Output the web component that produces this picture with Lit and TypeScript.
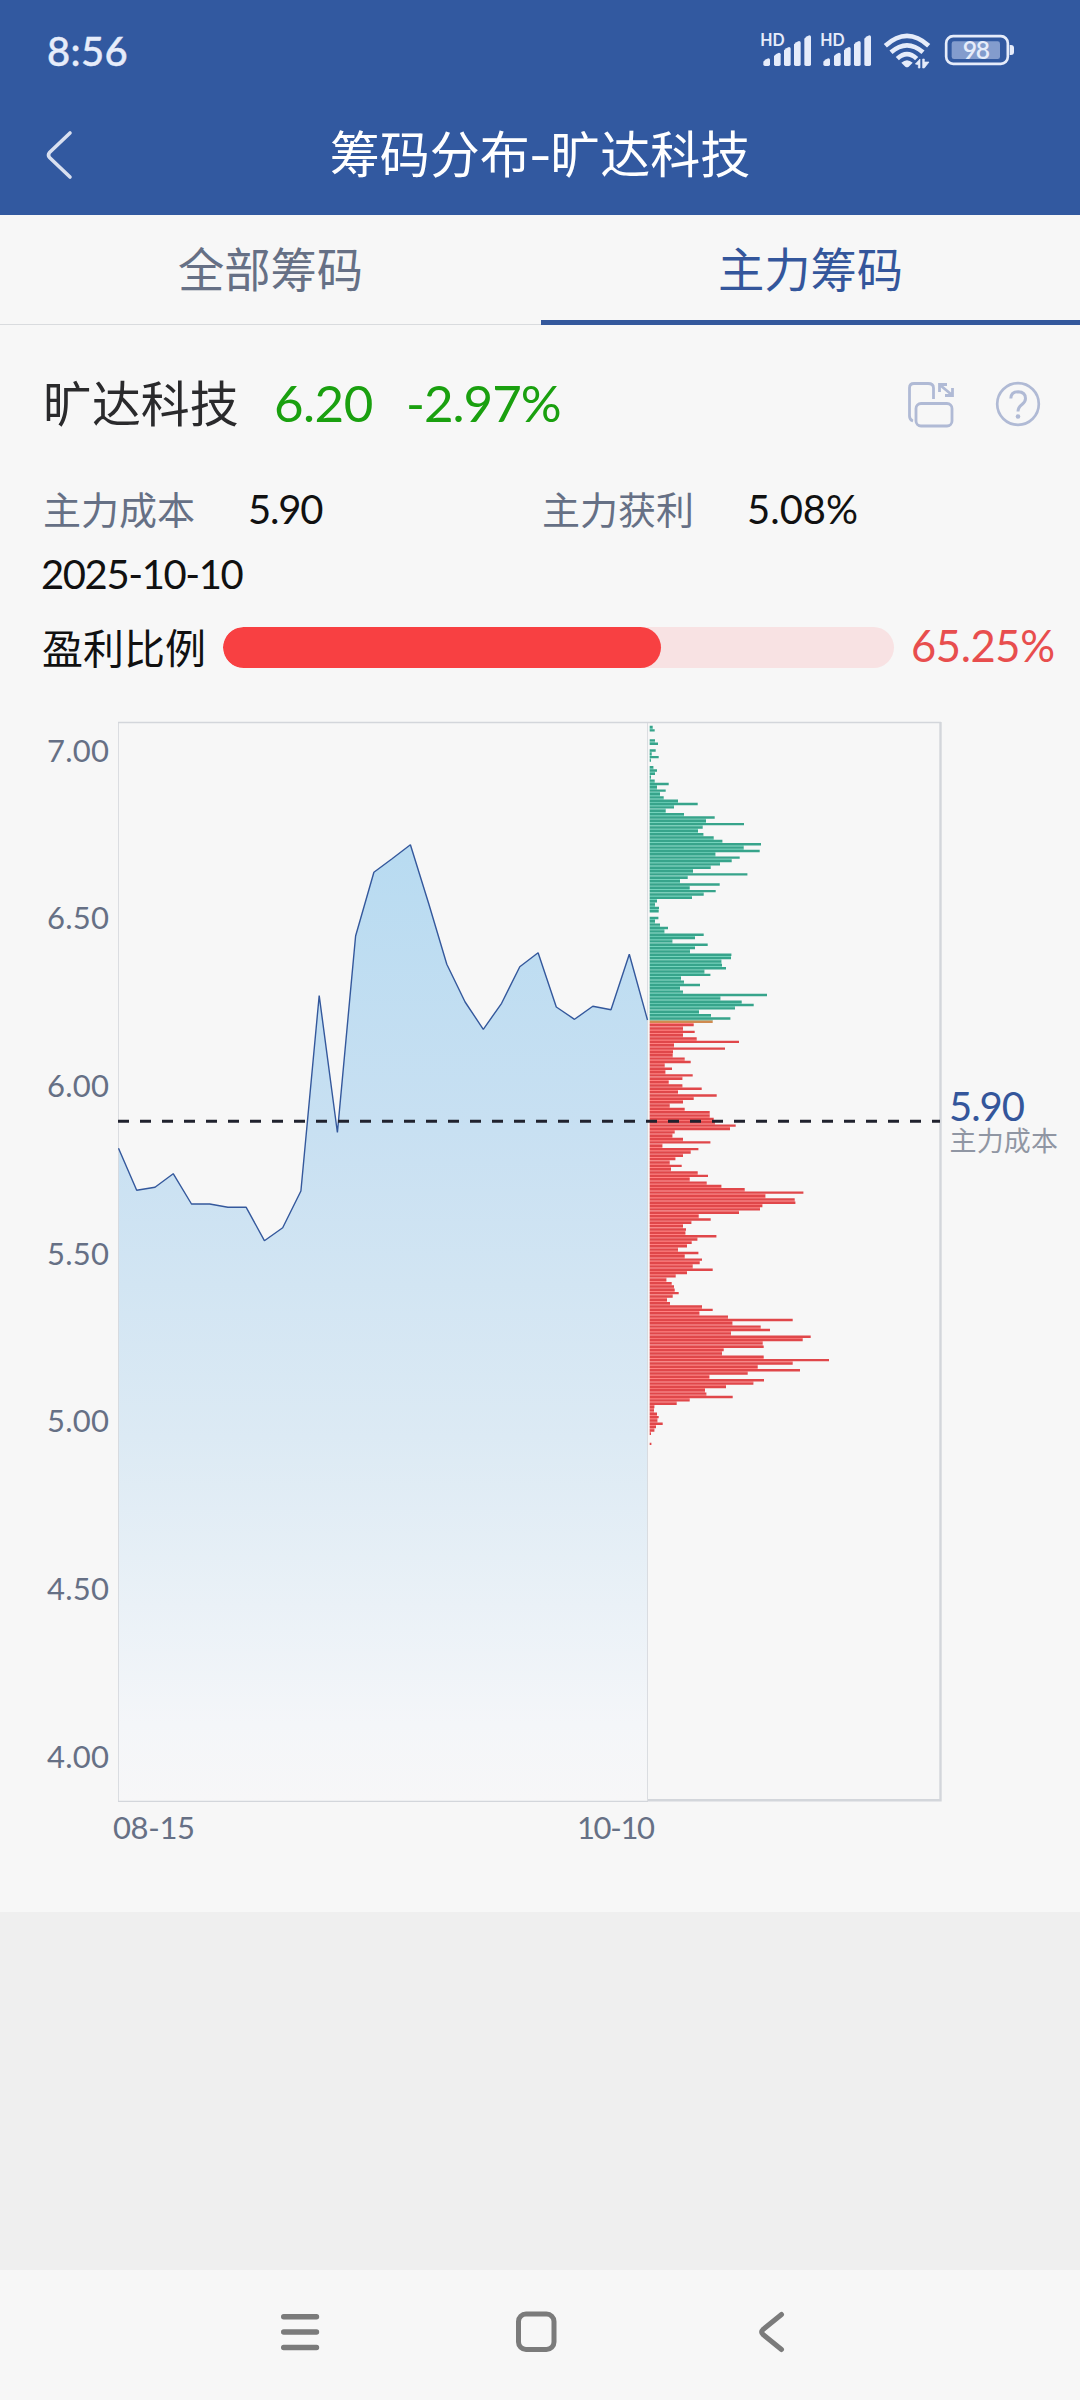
import { LitElement, html, svg, css } from "lit";
import { customElement } from "lit/decorators.js";

const CHART_LEFT = 118.5;
const SPLIT_X = 647.5;
const BAR_X = 649.7;
const ROW_STEP = 3.35;
const FIRST_ROW_Y = 11;
const CURRENT_ROW = 88;

// Closing price curve, y in chart pixels, one entry per trading day.
const closes = [
  432.3, 474.3, 471.3, 457.7, 488, 488, 491.3, 491.3, 524.7, 511.7, 475, 279.5, 416.5, 220, 156.3, 142.7,
  128.8, 187.3, 248.3, 286, 313.3, 287.3, 250.7, 236.7, 291, 303.3, 290.3, 293.7, 238.3, 304,
];

// Chip volume per 0.01 price step, highest price first.
const chips = [
  9, 15, 0, 0, 16, 25, 0, 18, 6, 27, 4, 0, 11, 22, 16, 4, 15, 57, 22, 48, 31, 42, 85, 144, 73, 48, 103, 195, 169,
  283, 159, 145, 161, 192, 218, 334, 282, 330, 197, 270, 246, 211, 183, 130, 293, 114, 91, 210, 120, 198, 162,
  127, 22, 16, 28, 27, 0, 26, 16, 31, 55, 44, 162, 136, 68, 174, 136, 121, 245, 244, 215, 217, 229, 164, 182,
  94, 103, 151, 91, 100, 352, 212, 276, 312, 256, 148, 184, 242, 189, 132, 100, 135, 100, 141, 268, 73, 226, 70,
  69, 105, 123, 45, 67, 47, 129, 98, 57, 98, 156, 85, 201, 132, 100, 60, 105, 180, 180, 192, 196, 258, 241, 75,
  68, 100, 182, 38, 146, 123, 100, 77, 60, 96, 64, 144, 175, 120, 171, 215, 285, 461, 347, 435, 437, 338, 331,
  268, 147, 183, 125, 100, 109, 107, 200, 143, 126, 112, 85, 146, 105, 157, 150, 129, 189, 112, 78, 50, 66, 73,
  75, 87, 69, 52, 61, 157, 189, 149, 235, 429, 248, 333, 361, 244, 483, 459, 339, 342, 222, 217, 342, 538, 429,
  324, 451, 294, 179, 343, 311, 229, 166, 170, 249, 120, 81, 14, 13, 22, 27, 23, 39, 19, 14, 4, 0, 0, 5,
];

const priceTicks = ["7.00", "6.50", "6.00", "5.50", "5.00", "4.50", "4.00"];

@customElement("chip-chart")
export class ChipChart extends LitElement {
  static styles = css`
    :host { display: block; }
    svg { display: block; }
    text { font-family: Lato, "Noto Sans CJK SC", sans-serif; }
    .tick { font-size: 31px; fill: #667085; }
    .frame { fill: none; stroke: #d3d6db; }
    .curve { fill: none; stroke: #34589c; stroke-width: 1.4; stroke-linejoin: bevel; }
    .cost { stroke: #20222e; stroke-width: 3; stroke-dasharray: 11 11; }
    .cost-value { font-size: 40px; fill: #34569b; }
    .cost-label { font-size: 27px; fill: #9096a3; }
  `;

  // Outline of all rows from one index to another, as a single path.
  private bars(from: number, to: number) {
    return chips.slice(from, to).map((w, k) => {
      const y = FIRST_ROW_Y + (from + k) * ROW_STEP - 1.2;
      return w ? `M${BAR_X} ${y.toFixed(2)}h${(w / 3).toFixed(1)}v2.4H${BAR_X}Z` : "";
    }).join("");
  }

  // The gap below a row is tinted as far as both neighbours reach.
  private gaps(from: number, to: number) {
    return chips.slice(from, to).map((w, k) => {
      const shared = Math.min(w, chips[from + k + 1] ?? 0) / 3;
      const y = FIRST_ROW_Y + (from + k) * ROW_STEP + 1;
      return shared ? `M${BAR_X} ${y.toFixed(2)}h${shared.toFixed(1)}v1.4H${BAR_X}Z` : "";
    }).join("");
  }

  render() {
    const step = (SPLIT_X - CHART_LEFT) / (closes.length - 1);
    const pts = closes.map((y, i) => `${(CHART_LEFT + i * step).toFixed(1)},${y}`).join(" ");
    const end = chips.length;
    return html`
      <svg width="1080" height="1196" viewBox="0 0 1080 1196">
        <defs>
          <linearGradient id="area" gradientUnits="userSpaceOnUse" x1="0" y1="128" x2="0" y2="1085">
            <stop offset="0" stop-color="#b8dbf1"></stop>
            <stop offset="0.3" stop-color="#c8e0f2"></stop>
            <stop offset="0.62" stop-color="#dceaf4"></stop>
            <stop offset="0.92" stop-color="#f4f6f9"></stop>
            <stop offset="1" stop-color="#f7f7f8"></stop>
          </linearGradient>
        </defs>
        <polygon points="${CHART_LEFT - 0.5},1085 ${pts} ${SPLIT_X},1085" fill="url(#area)"></polygon>
        <path class="frame" stroke-width="1.6" d="M118 6.5H941"></path>
        <path class="frame" stroke-width="1" opacity="0.8" d="M118.5 7V1085M647.5 7V1085"></path>
        <path class="frame" stroke-width="1.2" d="M118 1085.3H648"></path>
        <path class="frame" stroke-width="2.4" d="M648 1084.3H940.5V6"></path>
        <polyline class="curve" points=${pts}></polyline>
        <path fill="#74d3bc" d=${this.gaps(0, CURRENT_ROW)}></path>
        <path fill="#ff8080" d=${this.gaps(CURRENT_ROW, end)}></path>
        <path fill="#37a48b" d=${this.bars(0, CURRENT_ROW)}></path>
        <path fill="#d08a50" d=${this.bars(CURRENT_ROW, CURRENT_ROW + 1)}></path>
        <path fill="#e0474a" d=${this.bars(CURRENT_ROW + 1, end)}></path>
        <path class="cost" d="M118 405.3H940"></path>
        ${priceTicks.map((t, i) => svg`<text class="tick" text-anchor="end" x="109" y=${45.6 + i * 167.7} textLength="62">${t}</text>`)}
        <text class="tick" x="113" y="1123" textLength="82">08-15</text>
        <text class="tick" x="577" y="1123" textLength="78">10-10</text>
        <text class="cost-value" x="949" y="405" textLength="76">5.90</text>
        <text class="cost-label" x="949.5" y="434.5" textLength="108.5">主力成本</text>
      </svg>`;
  }
}

@customElement("app-root")
export class AppRoot extends LitElement {
  static styles = css`
    :host {
      display: flex; flex-direction: column; width: 1080px; height: 2400px; overflow: hidden;
      background: #f7f7f7; color: #111;
      font-family: Lato, "Noto Sans CJK SC", sans-serif;
    }
    svg { display: block; flex: none; }
    .top { height: 215px; background: #3259a0; display: flex; flex-direction: column; flex: none; }
    .status { height: 102px; display: flex; align-items: center; justify-content: space-between; padding: 0 60px 0 47px; color: #e6ecfa; }
    .time { font-size: 40px; font-weight: 500; letter-spacing: 0.3px; -webkit-text-stroke: 0.4px #e6ecfa; }
    .status svg { margin-top: 6px; }
    .titlebar { height: 106px; display: grid; grid-template-columns: 120px 1fr 120px; align-items: center; }
    .back { padding-left: 44px; }
    .title { text-align: center; color: #fff; font-size: 50px; line-height: 60px; margin-top: -3px; white-space: nowrap; }
    .dash { display: inline-block; transform: scaleX(1.3); margin: 0 1px; }
    .tabs { display: grid; grid-template-columns: 541px 539px; height: 110px; flex: none; }
    .tab { display: flex; align-items: center; justify-content: center; font-size: 46.3px; color: #667085; box-sizing: border-box; border-bottom: 1.5px solid #d9dbde; }
    .tab.on { color: #34569b; border-bottom: 5px solid #34589c; }
    .tab span { margin-top: -7px; }
    .tab.on span { margin-top: -3px; }
    .quote { height: 155px; display: flex; align-items: center; padding: 0 39px 0 43px; flex: none; }
    .name { font-size: 48.9px; color: #2a2a2c; width: 231px; margin-top: -5px; }
    .price { font-size: 51px; color: #1aa00f; width: 132px; letter-spacing: -0.5px; margin-top: -1px; }
    .change { font-size: 51px; color: #1aa00f; flex: 1; letter-spacing: -1px; margin-top: -1px; }
    .tools { display: flex; align-items: center; gap: 40px; padding-top: 2px; }
    .stats { display: grid; grid-template-columns: 205px 294px 205px 1fr; align-items: center; padding-left: 43px; height: 58px; flex: none; font-size: 40px; }
    .stats .cost { letter-spacing: -1.2px; }
    .label { color: #667085; font-size: 38px; margin-top: -4px; }
    .date { padding-left: 41px; font-size: 40px; height: 72px; line-height: 72px; flex: none; color: #111; letter-spacing: -1.4px; }
    .ratio { display: flex; align-items: center; height: 74px; padding-left: 42px; flex: none; }
    .ratio-name { font-size: 41px; width: 181px; margin-top: -3px; }
    .track { width: 671px; height: 41px; border-radius: 21px; background: #f8e2e3; overflow: hidden; }
    .fill { height: 100%; border-radius: 21px; background: #f84042; }
    .pct { font-size: 43.5px; color: #e84e4e; margin: -4px 0 0 17px; letter-spacing: -0.4px; }
    .stats, .ratio { color: #111; }
    .chart { margin-top: 32px; height: 1196px; flex: none; }
    .blank { background: #efefef; height: 358px; flex: none; }
    .nav { flex: 1; display: flex; padding: 35px 0 0 275px; }
    .nav .home { margin-left: 186px; }
    .nav .prev { margin-left: 184px; }
  `;

  private statusIcons() {
    const levels = [[70, 118], [102, 101], [132, 84], [162, 66], [193, 49]];
    const sim = (dx: number) => svg`
      <g transform="translate(${dx} 0)">
        <text x="61" y="81" font-size="49" font-weight="700" font-family="Lato, sans-serif" textLength="73" lengthAdjust="spacingAndGlyphs">HD</text>
        ${levels.map(([x, y]) => svg`
          <path d="M${x} ${y + 10}Q${x + 6} ${y + 2} ${x + 15} ${y}Q${x + 20} ${y} ${x + 20} ${y + 5}V136Q${x + 20} 141 ${x + 15} 141H${x + 5}Q${x} 141 ${x} 136Z"></path>`)}
      </g>`;
    return html`
      <svg width="280" height="70" viewBox="0 0 840 210" fill="#e6ecfa">
        ${sim(0)}${sim(180)}
        <g fill="none" stroke="#e6ecfa" stroke-width="14">
          <path d="M436 80Q501 21 566 80"></path>
          <path d="M453 100Q501 58 549 100"></path>
          <path d="M472 119Q501 92 530 119"></path>
        </g>
        <path d="M484 131Q501 116 518 131L506 143Q501 147 496 143Z"></path>
        <path d="M540 120V147H535V137L526 135ZM548 147V120H553V129H567L553 147Z" stroke="#e6ecfa" stroke-width="2"></path>
        <rect x="618.500" y="51.500" width="185" height="83" rx="21" fill="none" stroke="#e6ecfa" stroke-width="8"></rect>
        <rect x="635" y="67" width="145" height="53" rx="7" fill="#839ccd"></rect>
        <path d="M809 78H813Q822 78 822 87V99Q822 108 813 108H809Z"></path>
        <text x="668" y="120" font-size="74" font-weight="600" font-family="Lato, sans-serif" textLength="82">98</text>
      </svg>`;
  }

  render() {
    return html`
      <div class="top">
        <div class="status"><span class="time">8:56</span>${this.statusIcons()}</div>
        <div class="titlebar">
          <div class="back">
            <svg width="30" height="50" viewBox="0 0 30 50" fill="none" stroke="#d9e0f0" stroke-width="3.6" stroke-linecap="round" stroke-linejoin="round">
              <path d="M26 3L5.500 22.500Q3.500 25 5.500 27.500L26 47"></path>
            </svg>
          </div>
          <div class="title">筹码分布<span class="dash">-</span>旷达科技</div>
        </div>
      </div>
      <div class="tabs">
        <div class="tab"><span>全部筹码</span></div>
        <div class="tab on"><span>主力筹码</span></div>
      </div>
      <div class="quote">
        <span class="name">旷达科技</span><span class="price">6.20</span><span class="change">-2.97%</span>
        <div class="tools">
          <svg width="48" height="50" viewBox="0 0 48 50" fill="none" stroke="#b0bad5" stroke-width="2.8">
            <path d="M6 42Q2.500 41 2.500 37V9Q2.500 4.500 7 4.500H21Q26.500 4.500 26.500 9V20"></path>
            <rect x="9" y="24.500" width="36" height="22.500" rx="5"></rect>
            <path d="M33 6L45 16M32.500 13V5.500H40M38 16.500H45.500V9"></path>
          </svg>
          <svg width="46" height="46" viewBox="0 0 46 46" fill="none" stroke="#b0bad5" stroke-width="2.700">
            <circle cx="23" cy="23" r="20.800"></circle>
            <path stroke-width="3" d="M15.800 17.500Q16 10.800 23.200 10.800Q30.500 11 30.500 17.500Q30.500 20.800 27 23.500Q23 26.500 23 30.500"></path>
            <circle cx="23" cy="35.500" r="2.300" fill="#b0bad5" stroke="none"></circle>
          </svg>
        </div>
      </div>
      <div class="stats">
        <span class="label">主力成本</span><span class="cost">5.90</span>
        <span class="label">主力获利</span><span>5.08%</span>
      </div>
      <div class="date">2025-10-10</div>
      <div class="ratio">
        <span class="ratio-name">盈利比例</span>
        <div class="track"><div class="fill" style="width:65.25%"></div></div>
        <span class="pct">65.25%</span>
      </div>
      <chip-chart class="chart"></chip-chart>
      <div class="blank"></div>
      <div class="nav">
        <svg width="50" height="54" viewBox="0 0 50 54" stroke="#7b7b7b" stroke-width="5.400" stroke-linecap="round">
          <path d="M8.700 11.700H41.500M8.700 27H41.500M8.700 42.500H41.500"></path>
        </svg>
        <svg class="home" width="50" height="54" viewBox="0 0 50 54" fill="none" stroke="#7b7b7b" stroke-width="5">
          <rect x="7.500" y="9" width="35.500" height="35.500" rx="7.500"></rect>
        </svg>
        <svg class="prev" width="50" height="54" viewBox="0 0 50 54" fill="none" stroke="#7b7b7b" stroke-width="5" stroke-linecap="round" stroke-linejoin="round">
          <path d="M36.500 9.500L18 24.500Q15.500 27 18 29.500L36.500 44.500"></path>
        </svg>
      </div>`;
  }
}
